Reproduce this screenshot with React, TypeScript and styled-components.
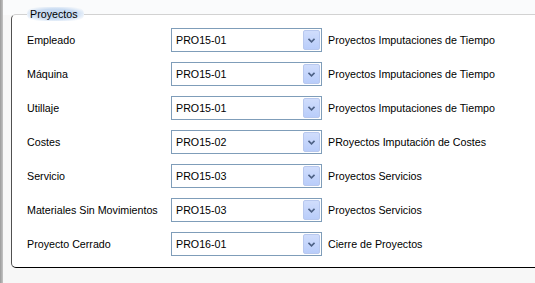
import React from "react";
import styled, { createGlobalStyle } from "styled-components";

const Global = createGlobalStyle`
  html, body { margin: 0; padding: 0; }
  body {
    width: 535px;
    height: 283px;
    overflow: hidden;
    background: #f7f7f7;
    font-family: "Liberation Sans", Arial, sans-serif;
    font-size: 10.7px;
    color: #000;
  }
`;

const Page = styled.div`
  display: flex;
  width: 535px;
  height: 283px;
`;

const LeftStrip = styled.div`
  width: 3px;
  flex: none;
  background: linear-gradient(to right, #9a9a9a, #c4c4c4);
`;

const Main = styled.div`
  flex: 1;
  background: linear-gradient(to bottom, #fafbfc 0, #fafbfc 15px, #f7f7f7 15px);
  padding-top: 7px;
  overflow: hidden;
`;

const Frame = styled.fieldset`
  margin: 0 -20px 0 8px;
  padding: 7px 0 11px 15px;
  background: #fff;
  border: 1px solid #d2d2d2;
  border-left-color: #505050;
  border-bottom-color: #000;
  border-radius: 5px;
  min-inline-size: auto;
`;

const Legend = styled.legend`
  margin-left: 0;
  padding: 0 6px 0 3px;
  line-height: 14px;
  border-radius: 7px;
  background: radial-gradient(ellipse at center, #c8dbf2 50%, rgba(200, 219, 242, 0) 85%);
  font-size: 10.7px;
`;

const Grid = styled.div`
  display: grid;
  grid-template-columns: 144px 151px auto;
  grid-auto-rows: 24px;
  row-gap: 10px;
  align-items: center;
`;

const Label = styled.span`
  white-space: nowrap;
`;

const Combo = styled.div`
  box-sizing: border-box;
  height: 24px;
  border: 1px solid #7f9db9;
  background: #fff;
  display: flex;
  align-items: center;
  padding: 1px;
`;

const ComboText = styled.span`
  flex: 1;
  padding-left: 3px;
`;

const DropButton = styled.div`
  box-sizing: border-box;
  width: 17px;
  height: 100%;
  border: 1px solid #b8c8ee;
  border-radius: 2px;
  background: linear-gradient(to bottom, #d0ddfc, #b9cdfa);
  display: flex;
  align-items: center;
  justify-content: center;
`;

const Desc = styled.span`
  padding-left: 6px;
  white-space: nowrap;
`;

const Chevron = () => (
  <svg width="7" height="5" viewBox="0 0 7 5">
    <path d="M0.5 0.8 L3.5 3.8 L6.5 0.8" fill="none" stroke="#4d6185" strokeWidth="1.6" />
  </svg>
);

const rows = [
  ["Empleado", "PRO15-01", "Proyectos Imputaciones de Tiempo"],
  ["Máquina", "PRO15-01", "Proyectos Imputaciones de Tiempo"],
  ["Utillaje", "PRO15-01", "Proyectos Imputaciones de Tiempo"],
  ["Costes", "PRO15-02", "PRoyectos Imputación de Costes"],
  ["Servicio", "PRO15-03", "Proyectos Servicios"],
  ["Materiales Sin Movimientos", "PRO15-03", "Proyectos Servicios"],
  ["Proyecto Cerrado", "PRO16-01", "Cierre de Proyectos"],
];

export default function App() {
  return (
    <>
      <Global />
      <Page>
        <LeftStrip />
        <Main>
          <Frame>
            <Legend>Proyectos</Legend>
            <Grid>
              {rows.map(([label, code, desc]) => (
                <React.Fragment key={label}>
                  <Label>{label}</Label>
                  <Combo>
                    <ComboText>{code}</ComboText>
                    <DropButton>
                      <Chevron />
                    </DropButton>
                  </Combo>
                  <Desc>{desc}</Desc>
                </React.Fragment>
              ))}
            </Grid>
          </Frame>
        </Main>
      </Page>
    </>
  );
}
